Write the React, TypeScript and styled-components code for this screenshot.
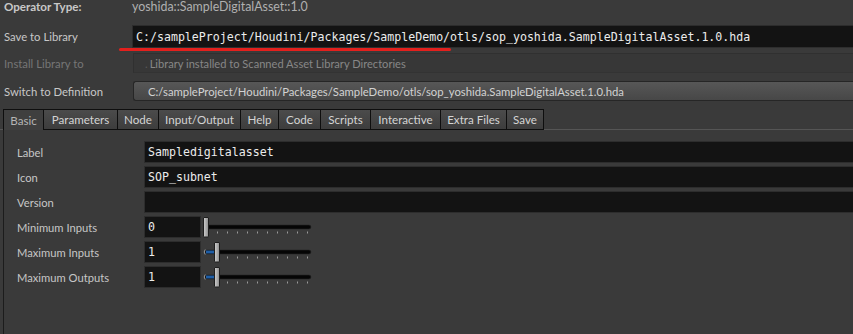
import React from 'react';
import styled, { createGlobalStyle, css } from 'styled-components';

const GlobalStyle = createGlobalStyle`
  html, body {
    margin: 0;
    padding: 0;
    background: #3a3a3a;
    overflow: hidden;
  }
  body {
    font-family: Lato, "Noto Sans", sans-serif;
    -webkit-font-smoothing: antialiased;
  }
`;

const mono = css`
  font-family: "DejaVu Sans Mono", "Liberation Mono", monospace;
  font-size: 11.6px;
`;

const Page = styled.div`
  position: relative;
  width: 853px;
  height: 334px;
  overflow: hidden;
  background: #3a3a3a;
  display: flex;
  flex-direction: column;
`;

const Header = styled.div`
  display: flex;
  flex-direction: column;
  margin-top: -5px;
  padding-left: 4px;
`;

const HeaderRow = styled.div<{ $h: number; $top: number }>`
  display: grid;
  grid-template-columns: 128px 1fr;
  align-items: center;
  height: ${({ $h }) => $h}px;
  margin-top: ${({ $top }) => $top}px;
`;

const HeaderLabel = styled.div<{ $disabled?: boolean; $bold?: boolean }>`
  font-size: ${({ $bold }) => ($bold ? 11.6 : 11.3)}px;
  color: ${({ $disabled }) => ($disabled ? '#767676' : '#c8c8c8')};
  font-weight: ${({ $bold }) => ($bold ? 700 : 400)};
  white-space: nowrap;
`;

const TypeValue = styled.div`
  font-size: 12.4px;
  color: #b0b0b0;
`;

const PathField = styled.div`
  ${mono};
  height: 100%;
  box-sizing: border-box;
  display: flex;
  align-items: center;
  padding-left: 3px;
  background: #131313;
  border-top: 1px solid #2c2c2c;
  border-left: 1px solid #2c2c2c;
  border-bottom: 1px solid #2e2e2e;
  color: #ececec;
  white-space: nowrap;
`;

const DisabledField = styled.div`
  height: 100%;
  box-sizing: border-box;
  display: flex;
  align-items: center;
  margin-left: 1px;
  padding-left: 11px;
  background: #373737;
  border-top: 1px solid #303030;
  border-left: 1px solid #303030;
  border-bottom: 1px solid #333333;
  font-size: 11.1px;
  color: #878787;
  white-space: nowrap;
`;

const Dot = styled.span`
  color: #5a5a5a;
  margin-right: 2px;
`;

const PathButton = styled.div`
  height: 100%;
  box-sizing: border-box;
  display: flex;
  align-items: center;
  margin-left: 1px;
  padding-left: 14px;
  background: linear-gradient(#575757, #474747);
  border: 1px solid #262626;
  border-right: none;
  border-radius: 3px 0 0 3px;
  font-size: 11.3px;
  color: #d2d2d2;
  white-space: nowrap;
`;

const Annotation = styled.div`
  position: absolute;
  left: 119px;
  top: 47.5px;
  width: 332px;
  height: 3px;
  border-radius: 2px;
  background: #e3201d;
`;

const TabBar = styled.div`
  display: flex;
  margin-top: 8px;
  padding-left: 4px;
  height: 20px;
  border-bottom: 1px solid #555555;
`;

const Tab = styled.div<{ $w: number; $active?: boolean }>`
  width: ${({ $w }) => $w}px;
  height: 21px;
  box-sizing: border-box;
  margin-left: -1px;
  display: flex;
  align-items: center;
  justify-content: center;
  font-size: 11.6px;
  border: 1px solid #0e0e0e;
  border-bottom: ${({ $active }) => ($active ? 'none' : '1px solid #0e0e0e')};
  background: ${({ $active }) =>
    $active ? '#3f3f3f' : 'linear-gradient(#4b4b4b, #3d3d3d)'};
  color: ${({ $active }) => ($active ? '#b5b5b5' : '#d4d4d4')};
`;

const Panel = styled.div`
  flex: 1;
  margin-left: 3px;
  border-left: 1px solid #1c1c1c;
  padding: 11px 0 0 13px;
  display: flex;
  flex-direction: column;
  gap: 3px;
`;

const ParmRow = styled.div`
  display: grid;
  grid-template-columns: 127px 1fr;
  align-items: center;
  height: 22px;
`;

const ParmLabel = styled.div`
  font-size: 11.2px;
  color: #c6c6c6;
  white-space: nowrap;
`;

const StringField = styled.div`
  ${mono};
  height: 22px;
  box-sizing: border-box;
  display: flex;
  align-items: center;
  padding-left: 3px;
  background: #131313;
  border: 1px solid #2d2d2d;
  border-right: none;
  color: #ececec;
`;

const IntGroup = styled.div`
  display: flex;
  align-items: center;
  gap: 1px;
`;

const IntField = styled(StringField)`
  width: 57px;
  border-right: 1px solid #2d2d2d;
`;

function Slider({ value }: { value: number }) {
  const hx = 1 + value * 11;
  const ticks = Array.from({ length: 10 }, (_, i) => 15 + i * 10);
  return (
    <svg width="110" height="22" viewBox="0 0 110 22">
      <defs>
        <linearGradient id="knob" x1="0" x2="1" y1="0" y2="0">
          <stop offset="0" stopColor="#cfcfcf" />
          <stop offset="1" stopColor="#8c8c8c" />
        </linearGradient>
      </defs>
      <rect x="3" y="9" width="106" height="4" rx="2" fill="#050505" stroke="#262626" strokeWidth="0.6" />
      {ticks.map((t) => (
        <rect key={t} x={t} y="15.5" width="1" height="2" fill="#9a9a9a" />
      ))}
      {value > 0 && (
        <>
          <path d="M3.2 8.5 Q1.2 11 3.2 13.5" stroke="#9a9a9a" strokeWidth="1" fill="none" />
          <rect x="4" y="9.5" width={hx - 4} height="3" fill="#1f5ea6" />
        </>
      )}
      <rect x={hx + 0.5} y="1.5" width="5" height="19.5" rx="0.5" fill="url(#knob)" stroke="#1e1e1e" />
    </svg>
  );
}

const tabs = [
  { name: 'Basic', w: 41 },
  { name: 'Parameters', w: 75 },
  { name: 'Node', w: 42 },
  { name: 'Input/Output', w: 83 },
  { name: 'Help', w: 39 },
  { name: 'Code', w: 43 },
  { name: 'Scripts', w: 51 },
  { name: 'Interactive', w: 71 },
  { name: 'Extra Files', w: 67 },
  { name: 'Save', w: 38 },
];

const path = 'C:/sampleProject/Houdini/Packages/SampleDemo/otls/sop_yoshida.SampleDigitalAsset.1.0.hda';

export default function App() {
  return (
    <Page>
      <GlobalStyle />
      <Header>
        <HeaderRow $h={22} $top={0}>
          <HeaderLabel $bold>Operator Type:</HeaderLabel>
          <TypeValue>yoshida::SampleDigitalAsset::1.0</TypeValue>
        </HeaderRow>
        <HeaderRow $h={23} $top={8}>
          <HeaderLabel>Save to Library</HeaderLabel>
          <PathField>{path}</PathField>
        </HeaderRow>
        <HeaderRow $h={20} $top={5}>
          <HeaderLabel $disabled>Install Library to</HeaderLabel>
          <DisabledField>
            <Dot>.</Dot>Library installed to Scanned Asset Library Directories
          </DisabledField>
        </HeaderRow>
        <HeaderRow $h={20} $top={8}>
          <HeaderLabel>Switch to Definition</HeaderLabel>
          <PathButton>{path}</PathButton>
        </HeaderRow>
      </Header>
      <Annotation />
      <TabBar>
        {tabs.map((t, i) => (
          <Tab key={t.name} $w={t.w} $active={i === 0}>
            {t.name}
          </Tab>
        ))}
      </TabBar>
      <Panel>
        <ParmRow>
          <ParmLabel>Label</ParmLabel>
          <StringField>Sampledigitalasset</StringField>
        </ParmRow>
        <ParmRow>
          <ParmLabel>Icon</ParmLabel>
          <StringField>SOP_subnet</StringField>
        </ParmRow>
        <ParmRow>
          <ParmLabel>Version</ParmLabel>
          <StringField />
        </ParmRow>
        {[
          { label: 'Minimum Inputs', value: 0 },
          { label: 'Maximum Inputs', value: 1 },
          { label: 'Maximum Outputs', value: 1 },
        ].map((p) => (
          <ParmRow key={p.label}>
            <ParmLabel>{p.label}</ParmLabel>
            <IntGroup>
              <IntField>{p.value}</IntField>
              <Slider value={p.value} />
            </IntGroup>
          </ParmRow>
        ))}
      </Panel>
    </Page>
  );
}
